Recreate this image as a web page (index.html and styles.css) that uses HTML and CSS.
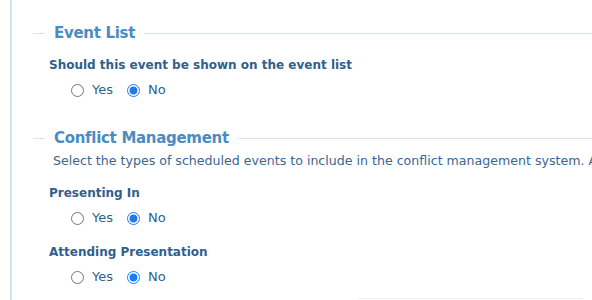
FILE: index.html
```html
<!DOCTYPE html>
<html lang="en">
<head>
  <meta charset="UTF-8">
  <title>Event Settings</title>
  <link rel="stylesheet" href="styles.css">
</head>
<body>

<div class="panel">
  <fieldset class="group">
    <legend>Event List</legend>
    <div class="field">
      <div class="field-label">Should this event be shown on the event list</div>
      <div class="choices">
        <label><input type="radio" name="eventlist"> Yes</label>
        <label><input type="radio" name="eventlist" checked> No</label>
      </div>
    </div>
  </fieldset>

  <fieldset class="group">
    <legend>Conflict Management</legend>
    <p class="hint">Select the types of scheduled events to include in the conflict management system. Any events not selected will be ignored.</p>
    <div class="field">
      <div class="field-label">Presenting In</div>
      <div class="choices">
        <label><input type="radio" name="presenting"> Yes</label>
        <label><input type="radio" name="presenting" checked> No</label>
      </div>
    </div>
    <div class="field">
      <div class="field-label">Attending Presentation</div>
      <div class="choices">
        <label><input type="radio" name="attending"> Yes</label>
        <label><input type="radio" name="attending" checked> No</label>
      </div>
    </div>
  </fieldset>

  <div class="footer-bar"></div>
</div>

</body>
</html>
```

FILE: styles.css
```css
body {
  font-family: "DejaVu Sans", Verdana, sans-serif;
  margin: 0;
  padding: 0;
  background-color: #ffffff;
  overflow: hidden;
  height: 300px;
}

/* Outer panel with the blue left rule */
.panel {
  margin-left: 10px;
  border-left: 2px solid #cfe3f3;
  padding: 10px 0 0 21px;
  height: 300px;
  box-sizing: border-box;
}

.group {
  margin: 15px 0 0 0;
  padding: 0 0 0 16px;
  border: none;
  border-top: 1px solid #d3e6f5;
}

.group + .group {
  margin-top: 32px;
}

.group legend {
  color: #4a8cc2;
  font-size: 15px;
  line-height: 16px;
  letter-spacing: -0.3px;
  font-weight: bold;
  padding: 0 9px;
  margin-left: -4px;
}

.hint {
  margin: 8px 0 0 4px;
  color: #3a6693;
  font-size: 12.6px;
  line-height: 13px;
  white-space: nowrap;
}

.field {
  margin-top: 17px;
}

.hint + .field {
  margin-top: 19px;
}

.field + .field {
  margin-top: 19px;
}

.field-label {
  color: #2f5f8e;
  font-size: 12px;
  line-height: 15px;
  font-weight: bold;
}

.choices {
  display: flex;
  gap: 14px;
  margin: 9px 0 0 22px;
  color: #2f5f8e;
  font-size: 13px;
  line-height: 16px;
}

.choices label {
  display: flex;
  align-items: center;
  gap: 8px;
}

.choices input {
  margin: 0;
  width: 13px;
  height: 13px;
  accent-color: #1c7cf4;
}

.footer-bar {
  margin: 13px 0 0 324px;
  width: 226px;
  border-top: 1px solid #eeeeee;
}
```
